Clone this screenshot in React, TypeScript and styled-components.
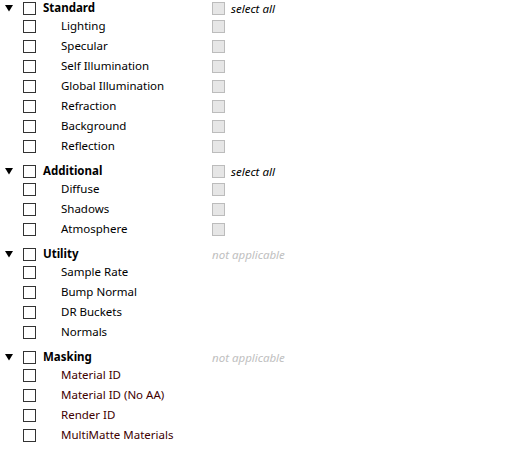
import styled, { createGlobalStyle } from "styled-components";

type Item = { label: string; toggle: boolean };
type Group = {
  title: string;
  side: "select" | "na";
  tone?: "normal" | "dark";
  items: Item[];
};

const groups: Group[] = [
  {
    title: "Standard",
    side: "select",
    items: [
      "Lighting",
      "Specular",
      "Self Illumination",
      "Global Illumination",
      "Refraction",
      "Background",
      "Reflection",
    ].map((label) => ({ label, toggle: true })),
  },
  {
    title: "Additional",
    side: "select",
    items: ["Diffuse", "Shadows", "Atmosphere"].map((label) => ({ label, toggle: true })),
  },
  {
    title: "Utility",
    side: "na",
    items: ["Sample Rate", "Bump Normal", "DR Buckets", "Normals"].map((label) => ({
      label,
      toggle: false,
    })),
  },
  {
    title: "Masking",
    side: "na",
    tone: "dark",
    items: ["Material ID", "Material ID (No AA)", "Render ID", "MultiMatte Materials"].map(
      (label) => ({ label, toggle: false })
    ),
  },
];

const Global = createGlobalStyle`
  body {
    margin: 0;
    background: #ffffff;
    font-family: "Noto Sans", "DejaVu Sans", sans-serif;
    font-size: 11.5px;
    color: #000;
  }
`;

const App = () => {
  return (
    <Page>
      <Global />
      {groups.map((g) => (
        <GroupBox key={g.title}>
          <HeaderRow>
            <Arrow>
              <svg width="8" height="7" viewBox="0 0 8 7">
                <path d="M0 0H8L4 6.5Z" fill="#000" />
              </svg>
            </Arrow>
            <Check />
            <Label $indent={7} $bold>
              {g.title}
            </Label>
            {g.side === "select" ? (
              <Side>
                <Check $disabled />
                <Hint>select all</Hint>
              </Side>
            ) : (
              <Side>
                <Hint $muted>not applicable</Hint>
              </Side>
            )}
          </HeaderRow>
          {g.items.map((it) => (
            <ItemRow key={it.label}>
              <span />
              <Check />
              <Label $indent={25} $dark={g.tone === "dark"}>
                {it.label}
              </Label>
              <Side>{it.toggle && <Check $disabled />}</Side>
            </ItemRow>
          ))}
        </GroupBox>
      ))}
    </Page>
  );
};

export default App;

const Page = styled.div`
  display: flex;
  flex-direction: column;
  gap: 7px;
  width: 530px;
`;

const GroupBox = styled.div`
  display: flex;
  flex-direction: column;
`;

const HeaderRow = styled.div`
  display: grid;
  grid-template-columns: 23px 13px 176px auto;
  align-items: center;
  height: 16px;
`;

const ItemRow = styled(HeaderRow)`
  height: 20px;
`;

const Arrow = styled.span`
  display: flex;
  padding-left: 5px;
  padding-top: 1px;
`;

const Check = styled.span<{ $disabled?: boolean }>`
  display: block;
  width: 13px;
  height: 13px;
  box-sizing: border-box;
  border: 1px solid ${(p) => (p.$disabled ? "#bcbcbc" : "#333333")};
  background: ${(p) => (p.$disabled ? "#e6e6e6" : "#ffffff")};
`;

const Label = styled.span<{ $indent: number; $bold?: boolean; $dark?: boolean }>`
  padding-left: ${(p) => p.$indent}px;
  font-weight: ${(p) => (p.$bold ? 700 : 400)};
  color: ${(p) => (p.$dark ? "#400000" : "#000000")};
  white-space: nowrap;
  line-height: 16px;
`;

const Side = styled.span`
  display: flex;
  align-items: center;
  gap: 6px;
`;

const Hint = styled.span<{ $muted?: boolean }>`
  font-style: italic;
  color: ${(p) => (p.$muted ? "#c0c0c0" : "#000000")};
  white-space: nowrap;
`;
